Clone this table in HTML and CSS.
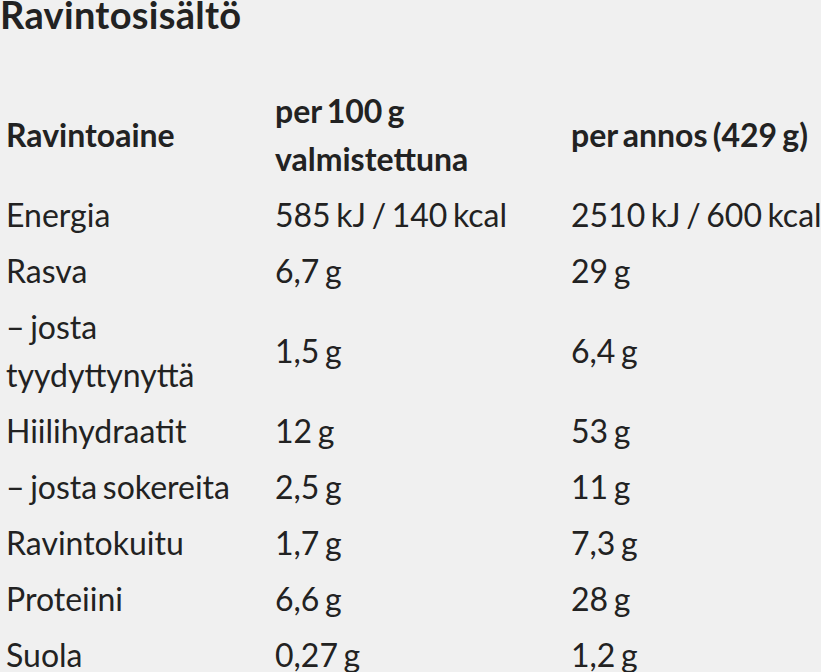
FILE: index.html
```html
<!DOCTYPE html>
<html lang="fi">
<head>
<meta charset="utf-8">
<title>Ravintosisältö</title>
<link rel="stylesheet" href="styles.css">
</head>
<body>
<section class="nutrition">
  <h2 class="nutrition__title">Ravintosisältö</h2>
  <table class="nutrition__table">
    <colgroup>
      <col class="col-name">
      <col class="col-100">
      <col class="col-serving">
    </colgroup>
    <thead>
      <tr>
        <th>Ravintoaine</th>
        <th>per 100 g valmistettuna</th>
        <th>per annos (429 g)</th>
      </tr>
    </thead>
    <tbody>
      <tr><td>Energia</td><td>585 kJ / 140 kcal</td><td>2510 kJ / 600 kcal</td></tr>
      <tr><td>Rasva</td><td>6,7 g</td><td>29 g</td></tr>
      <tr><td>– josta tyydyttynyttä</td><td>1,5 g</td><td>6,4 g</td></tr>
      <tr><td>Hiilihydraatit</td><td>12 g</td><td>53 g</td></tr>
      <tr><td>– josta sokereita</td><td>2,5 g</td><td>11 g</td></tr>
      <tr><td>Ravintokuitu</td><td>1,7 g</td><td>7,3 g</td></tr>
      <tr><td>Proteiini</td><td>6,6 g</td><td>28 g</td></tr>
      <tr><td>Suola</td><td>0,27 g</td><td>1,2 g</td></tr>
    </tbody>
  </table>
</section>
</body>
</html>
```
FILE: styles.css
```css
html, body {
  margin: 0;
  padding: 0;
  background: #f0f0f0;
  overflow: hidden;
}
body {
  font-family: Lato, "Noto Sans", sans-serif;
  color: #222222;
}
.nutrition__title {
  margin: 0;
  font-size: 38px;
  font-weight: 700;
  line-height: 28px;
  letter-spacing: 0.3px;
}
.nutrition__table {
  margin-top: 55px;
  border-collapse: collapse;
  table-layout: fixed;
  width: 840px;
  font-size: 32px;
  line-height: 48px;
  word-spacing: -2.6px;
}
.col-name { width: 269px; }
.col-100 { width: 296px; }
.col-serving { width: 275px; }
.nutrition__table th,
.nutrition__table td {
  padding: 4px 6px;
  text-align: left;
  vertical-align: middle;
}
.nutrition__table th {
  font-weight: 700;
}
.nutrition__table td {
  font-weight: 400;
}
```
